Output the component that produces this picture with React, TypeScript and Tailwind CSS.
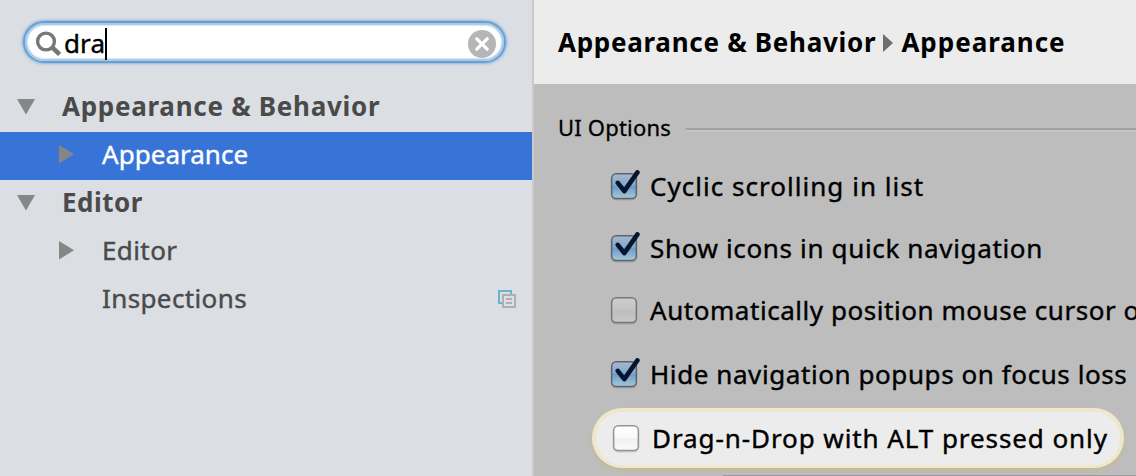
type TreeRowProps = {
  label: string;
  level?: 0 | 1;
  arrow?: 'down' | 'right';
  selected?: boolean;
  spacing: string;
  scoped?: boolean;
};

function Arrow({ kind }: { kind?: 'down' | 'right' }) {
  return (
    <svg className="h-6 w-6 shrink-0" viewBox="0 0 24 24" fill="#868686">
      {kind === 'down' && <path d="M3 3h18l-9 15.5z" />}
      {kind === 'right' && <path d="M5 1l15 9.3L5 19.5z" />}
    </svg>
  );
}

function ScopeIcon() {
  return (
    <svg className="mb-0.5 mr-4 h-[18px] w-[18px]" viewBox="0 0 18 18" fill="none" strokeWidth="2">
      <path d="M4 13H1V1h12v3" stroke="#6fafd0" />
      <path d="M5 5h12v12H5z M8 9h6 M8 13h6" stroke="#b0b0b0" />
    </svg>
  );
}

function TreeRow({ label, level = 0, arrow, selected, spacing, scoped }: TreeRowProps) {
  return (
    <div
      className={`flex h-12 items-center ${level ? 'pl-[54px]' : 'pl-[14px]'} ${
        selected ? 'bg-[#3874d8] text-white' : 'text-[#4a4a4a]'
      }`}
    >
      <Arrow kind={arrow} />
      <span
        className={`flex-1 whitespace-nowrap pb-1 pl-6 ${
          level ? '[-webkit-text-stroke:0.4px_currentColor]' : 'font-bold'
        } ${spacing}`}
      >
        {label}
      </span>
      {scoped && <ScopeIcon />}
    </div>
  );
}

function CheckBox({ checked, bright }: { checked?: boolean; bright?: boolean }) {
  return (
    <svg className="mb-0.5 h-8 w-8 shrink-0" viewBox="0 0 32 32" fill="none">
      <defs>
        <linearGradient id="checkbox-on" x1="0" y1="0" x2="0" y2="1">
          <stop offset="0" stopColor="#a6b8ca" />
          <stop offset="0.46" stopColor="#82a9cf" />
          <stop offset="0.52" stopColor="#6b9ccb" />
          <stop offset="1" stopColor="#a8cad7" />
        </linearGradient>
        <linearGradient id="checkbox-off" x1="0" y1="0" x2="0" y2="1">
          <stop offset="0" stopColor="#cccccc" />
          <stop offset="0.48" stopColor="#c4c4c4" />
          <stop offset="0.52" stopColor="#bebebe" />
          <stop offset="1" stopColor="#c8c8c8" />
        </linearGradient>
        <linearGradient id="checkbox-bright" x1="0" y1="0" x2="0" y2="1">
          <stop offset="0" stopColor="#ffffff" />
          <stop offset="0.48" stopColor="#fafafa" />
          <stop offset="0.52" stopColor="#f0f0f0" />
          <stop offset="1" stopColor="#fafafa" />
        </linearGradient>
      </defs>
      <rect x="1.2" y="4.4" width="25.6" height="25.4" rx="5" stroke="#000" strokeOpacity="0.13" strokeWidth="1.4" />
      <rect
        x="1.7"
        y="3.7"
        width="24.6"
        height="24.8"
        rx="4.5"
        fill={checked ? 'url(#checkbox-on)' : bright ? 'url(#checkbox-bright)' : 'url(#checkbox-off)'}
        stroke={checked ? '#5c6274' : bright ? '#949494' : '#777777'}
        strokeWidth="1.4"
      />
      {checked && (
        <path
          d="M7.8 12.9l6.5 8.2L27.4 2.4"
          stroke="#06152b"
          strokeWidth="4.6"
          strokeLinecap="round"
          strokeLinejoin="round"
        />
      )}
    </svg>
  );
}

function Option({ label, checked, spacing }: { label: string; checked?: boolean; spacing: string }) {
  return (
    <label className="flex h-[62px] items-center gap-2 pl-[76px]">
      <CheckBox checked={checked} />
      <span className={`whitespace-nowrap pb-0.5 [-webkit-text-stroke:0.4px_currentColor] ${spacing}`}>{label}</span>
    </label>
  );
}

function SearchField() {
  return (
    <div className="ml-[23px] mt-[21px] flex h-[42px] w-[483px] items-center rounded-full border-2 border-[#6a9fd1] bg-white pl-[10px] pr-2 shadow-[0_0_0_1px_#a5c3e0,0_0_2px_2px_#b9cde2,inset_0_0_1px_2px_#a9c9e8,inset_0_0_1px_3px_#dfebf6]">
      <svg className="h-[27px] w-[27px] shrink-0" viewBox="0 0 27 27" fill="none" stroke="#777">
        <circle cx="11" cy="12.5" r="8.4" strokeWidth="3.4" />
        <path d="M17 18.2l7.6 7.2" strokeWidth="4.6" />
      </svg>
      <span className="flex items-center pl-0.5">
        <span className="pt-px leading-8 tracking-[0.1px] text-black [-webkit-text-stroke:0.4px_currentColor]">dra</span>
        <span className="h-8 w-0.5 translate-y-0.5 bg-black" />
      </span>
      <svg className="ml-auto mt-1 h-7 w-7" viewBox="0 0 28 28">
        <circle cx="14" cy="14" r="14" fill="#b6b6b6" />
        <path d="M8.8 8.8l10.4 10.4m0-10.4l-10.4 10.4" stroke="#fff" strokeWidth="3.2" strokeLinecap="round" />
      </svg>
    </div>
  );
}

export default function App() {
  return (
    <div className="flex h-[476px] w-[1136px] overflow-hidden bg-[#bdbdbd] font-['Noto_Sans',sans-serif] text-[26px] text-black">
      <aside className="w-[534px] shrink-0 border-r-2 border-[#c9c9c9] bg-[#dbdee3]">
        <div className="flow-root h-[84px]">
          <SearchField />
        </div>
        <TreeRow label="Appearance & Behavior" arrow="down" spacing="tracking-[0.72px]" />
        <TreeRow label="Appearance" level={1} arrow="right" selected spacing="tracking-[0.03px]" />
        <TreeRow label="Editor" arrow="down" spacing="tracking-[0.5px]" />
        <TreeRow label="Editor" level={1} arrow="right" spacing="tracking-[0.4px]" />
        <TreeRow label="Inspections" level={1} spacing="tracking-[0.38px]" scoped />
      </aside>
      <main className="min-w-0 flex-1 overflow-hidden">
        <header className="flex h-[84px] items-center whitespace-nowrap bg-[#ececec] pl-6 font-bold">
          <span className="tracking-[0.72px]">Appearance &amp; Behavior</span>
          <svg className="ml-[7px] mr-2 mt-0.5 h-[18px] w-2.5" viewBox="0 0 10 18" fill="#6e6e6e">
            <path d="M0 0l10 9-10 9z" />
          </svg>
          <span className="tracking-[0.97px]">Appearance</span>
        </header>
        <section className="flex flex-col">
          <div className="flex h-[72px] items-start gap-[15px] pl-6 pt-[28px]">
            <h2 className="-mt-px whitespace-nowrap text-[22px] leading-8 tracking-[0.2px] [-webkit-text-stroke:0.3px_currentColor]">
              UI Options
            </h2>
            <div className="mt-4 h-1 flex-1 border-t-2 border-[#a0a0a0] bg-[#c5c5c5]" />
          </div>
          <Option label="Cyclic scrolling in list" checked spacing="tracking-[1.03px]" />
          <Option label="Show icons in quick navigation" checked spacing="tracking-[0.65px]" />
          <Option label="Automatically position mouse cursor on default button" spacing="tracking-[0.55px]" />
          <div className="pt-0.5">
            <Option label="Hide navigation popups on focus loss" checked spacing="tracking-[0.58px]" />
          </div>
          <label className="ml-[58px] mt-0.5 flex h-[60px] w-[532px] shrink-0 items-center gap-2 rounded-full border-4 border-b-[3px] border-[#efe7cd] bg-[#ececec] pl-4 shadow-[0_2px_4px_#c5b98d]">
            <CheckBox bright />
            <span className="whitespace-nowrap tracking-[0.92px] [-webkit-text-stroke:0.4px_currentColor]">
              Drag-n-Drop with ALT pressed only
            </span>
          </label>
          <div className="ml-[189px] mt-[7px] h-px bg-[#999]" />
        </section>
      </main>
    </div>
  );
}
